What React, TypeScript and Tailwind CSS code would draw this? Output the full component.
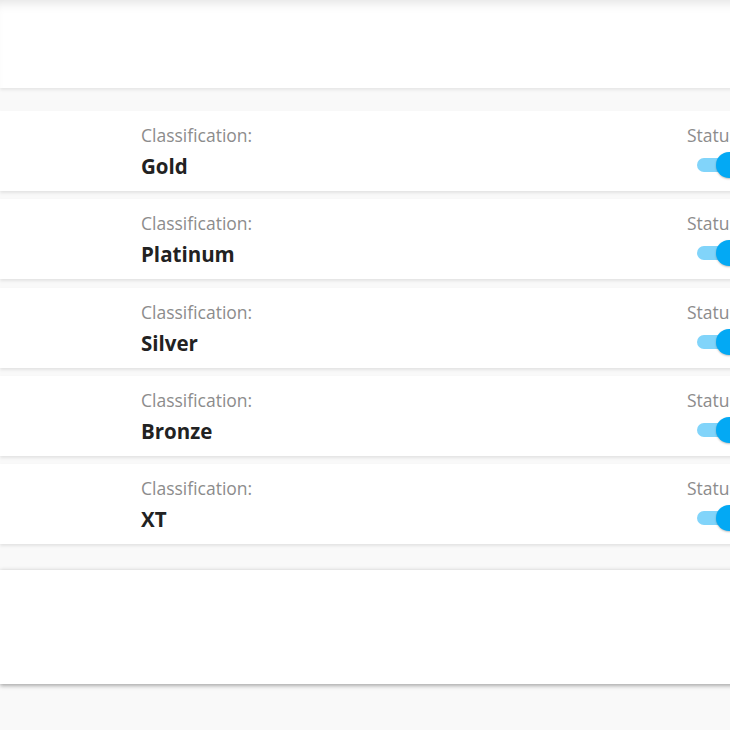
const rows = ["Gold", "Platinum", "Silver", "Bronze", "XT"];

const Toggle = () => {
  return (
    <div className="relative w-[40px] h-[28px] flex items-center">
      <div className="w-[38px] h-[14px] rounded-full bg-[#81d4fa]"></div>
      <div className="absolute left-[19px] top-[1px] w-[26px] h-[26px] rounded-full bg-[#03a9f4] shadow-[0_1px_2px_rgba(0,0,0,0.25)]"></div>
    </div>
  );
};

const ClassRow = ({ name }: { name: string }) => {
  return (
    <div className="h-[80px] bg-white shadow-[0_2px_3px_rgba(0,0,0,0.09)] flex pl-[141px] pt-[12px]">
      <div className="flex-1 flex flex-col">
        <span className="text-[17.5px] leading-[24px] text-[#8c8c8c]">Classification:</span>
        <span className="mt-[5px] text-[20.5px] leading-[28px] font-bold text-[#222222]">{name}</span>
      </div>
      <div className="w-[113px] flex flex-col">
        <span className="text-[17.5px] leading-[24px] text-[#8c8c8c] whitespace-nowrap">Status:</span>
        <div className="mt-[4px] pl-[10px]">
          <Toggle />
        </div>
      </div>
    </div>
  );
};

export default function App() {
  return (
    <div
      className="w-[730px] h-[730px] overflow-hidden bg-[#f9f9f9]"
      style={{ fontFamily: '"Open Sans", "Noto Sans", sans-serif' }}
    >
      <div className="w-[800px]">
        <div className="h-[88px] bg-white shadow-[inset_0_10px_12px_-8px_rgba(0,0,0,0.13),0_2px_3px_rgba(0,0,0,0.08)]"></div>
        <div className="mt-[23px] flex flex-col gap-[8.3px]">
          {rows.map((r) => (
            <ClassRow key={r} name={r} />
          ))}
        </div>
        <div className="mt-[26px] h-[114px] bg-white shadow-[0_-1px_4px_rgba(0,0,0,0.07),0_2px_4px_rgba(0,0,0,0.3)]"></div>
      </div>
    </div>
  );
}
